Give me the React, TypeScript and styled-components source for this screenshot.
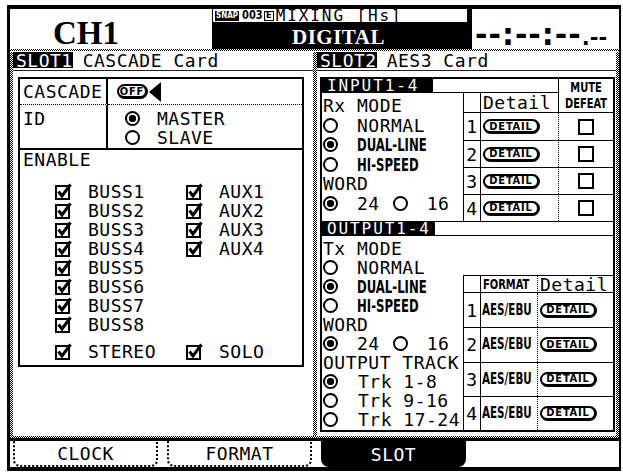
import styled, { createGlobalStyle, css } from "styled-components";

const LCD = `"DejaVu Sans Mono", "Liberation Mono", monospace`;
const NARROW = `"DejaVu Sans Condensed", "DejaVu Sans", "Liberation Sans", sans-serif`;
const SERIF = `"Liberation Serif", "DejaVu Serif", serif`;
const CHECKER = "repeating-conic-gradient(#000 0 25%, #fff 0 50%) 0 0 / 2px 2px";

const GlobalStyle = createGlobalStyle`
  html, body { margin: 0; padding: 0; background: #fff; }
  body { font-family: ${LCD}; font-size: 18px; color: #000; }
  * { box-sizing: border-box; }
`;

const Screen = styled.div`
  margin: 5px 0 0 7px;
  width: 614px;
  height: 466px;
  border: solid #000;
  border-width: 4px 2px 4px 3px;
  display: flex;
  flex-direction: column;
  letter-spacing: 0.5px;
  line-height: 19px;
`;

/* ---------- header ---------- */

const Header = styled.header`
  height: 39px;
  flex: none;
  display: grid;
  grid-template-columns: 202px 258px 1fr;
`;

const ChannelBox = styled.div`
  padding: 8px 0 0 43px;
  font-family: ${SERIF};
  font-weight: 700;
  font-size: 33px;
  line-height: 1;
  letter-spacing: 0;
`;

const TitleBox = styled.div`
  background: #000;
  display: flex;
  flex-direction: column;
  padding: 0 3px 0 1px;
`;

const SceneRow = styled.div`
  height: 13px;
  background: #fff;
  display: flex;
  align-items: center;
  padding-left: 2px;
  line-height: 13px;
  font-size: 16px;
  letter-spacing: 1.9px;
`;

const Narrow = styled.span<{ $size?: number }>`
  display: inline-block;
  font-family: ${NARROW};
  font-stretch: condensed;
  font-weight: 700;
  font-size: ${({ $size }) => $size ?? 13}px;
  letter-spacing: 0;
  transform: scaleY(1.35);
`;

const SnapBadge = styled.span`
  display: inline-flex;
  align-items: center;
  height: 10px;
  padding: 0 1px;
  background: #000;
  color: #fff;
  font-family: ${NARROW};
  font-stretch: condensed;
  font-weight: 700;
  font-size: 8px;
  letter-spacing: 0;
`;

const SceneNo = styled(Narrow)`
  margin-left: 3px;
  line-height: 10px;
  transform: scaleY(1.1);
`;

const EditFlag = styled.span`
  display: inline-flex;
  align-items: center;
  justify-content: center;
  height: 10px;
  width: 10px;
  margin-left: 1px;
  border: 1px solid #000;
  font-family: ${NARROW};
  font-weight: 700;
  font-size: 9px;
  letter-spacing: 0;
`;

const SceneName = styled.span`
  margin-left: 2px;
  white-space: pre;
`;

const ModeName = styled.div`
  flex: 1;
  padding: 5px 0 0 79px;
  color: #fff;
  font-family: ${SERIF};
  font-weight: 700;
  font-size: 21px;
  line-height: 1;
  letter-spacing: 0.5px;
`;

const TimeBox = styled.div`
  border-left: 2px solid #000;
  padding: 11px 0 0 3px;
  font-family: "DejaVu Sans", "Liberation Sans", sans-serif;
  font-weight: 700;
  font-size: 30px;
  line-height: 1;
  letter-spacing: 1px;
  white-space: pre;
`;

const TimeFrames = styled.span`
  font-size: 21px;
  letter-spacing: 0;
`;

const DotRule = styled.div`
  flex: none;
  height: 2px;
  margin: 1px 0;
  background: ${CHECKER};
`;

/* ---------- main area ---------- */

const Main = styled.main`
  flex: 1;
  min-height: 0;
  display: grid;
  grid-template-columns: 3px 300px 4px 1fr 3px;
`;

const DotColumn = styled.div`
  background: ${CHECKER};
`;

const Panel = styled.section`
  display: flex;
  flex-direction: column;
`;

const PanelTitle = styled.div`
  height: 19px;
  display: flex;
  align-items: flex-start;
  border-bottom: 1px solid #222;
  white-space: pre;
`;

const SlotLabel = styled.span`
  height: 16px;
  line-height: 17px;
  padding-left: 3px;
  background: #000;
  color: #fff;
`;

const CardName = styled.span`
  margin-left: 10px;
  line-height: 17px;
`;

const PanelBox = styled.div<{ $margin: string; $height: number }>`
  margin: ${({ $margin }) => $margin};
  height: ${({ $height }) => $height}px;
  border: 2px solid #000;
  display: flex;
  flex-direction: column;
`;

/* left: cascade card */

const SettingGrid = styled.div`
  display: grid;
  grid-template-columns: 88px 1fr;
  grid-template-rows: 26px 45px;
`;

const SettingCell = styled.div<{ $key?: boolean; $last?: boolean }>`
  display: flex;
  ${({ $key }) =>
    $key &&
    css`
      border-right: 2px solid #000;
      padding-left: 3px;
    `}
  ${({ $last }) =>
    $last
      ? css`
          border-bottom: 2px solid #000;
          flex-direction: column;
          padding-top: 4px;
        `
      : css`
          border-bottom: 1px dotted #000;
          align-items: center;
        `}
`;

const ToggleWrap = styled.div`
  display: flex;
  align-items: center;
  padding-left: 9px;
`;

const PillButton = styled.span<{ $width: number }>`
  display: inline-flex;
  align-items: center;
  justify-content: center;
  flex: none;
  width: ${({ $width }) => $width}px;
  height: 15px;
  border: 2px solid #000;
  border-right-width: 3px;
  border-bottom-width: 3px;
  border-radius: 8px;
  font-family: ${NARROW};
  font-stretch: condensed;
  font-weight: 700;
  font-size: 11px;
  letter-spacing: 0.8px;
  line-height: 1;
`;

const Cursor = styled.span`
  flex: none;
  width: 0;
  height: 0;
  margin-left: 1px;
  border-top: 10px solid transparent;
  border-bottom: 10px solid transparent;
  border-right: 12px solid #000;
`;

const Line = styled.div<{ $h?: number; $pad?: number; $gap?: number }>`
  display: flex;
  align-items: center;
  height: ${({ $h }) => $h ?? 19}px;
  padding-left: ${({ $pad }) => $pad ?? 0}px;
  gap: ${({ $gap }) => $gap ?? 19}px;
  white-space: pre;
`;

const Radio = styled.span<{ $on?: boolean; $inline?: boolean }>`
  flex: none;
  width: 15px;
  height: 15px;
  border: 2px solid #000;
  border-radius: 50%;
  background: ${({ $on }) =>
    $on ? "radial-gradient(circle, #000 0 3.4px, #fff 4px)" : "#fff"};
  ${({ $inline }) =>
    $inline &&
    css`
      margin-left: -6px;
    `}
`;

const EnableSection = styled.div`
  padding: 0 0 0 3px;
`;

const SectionLabel = styled.div`
  height: 20px;
  line-height: 20px;
`;

const CheckGrid = styled.div`
  margin-top: 12px;
  padding-left: 32px;
  display: grid;
  grid-template-columns: 17px 82px 17px auto;
  grid-auto-rows: 19px;
  column-gap: 16px;
  align-items: center;
`;

const CheckLabel = styled.span<{ $gapTop?: boolean }>`
  ${({ $gapTop }) =>
    $gapTop &&
    css`
      margin-top: 16px;
    `}
`;

const CheckSpot = styled.span<{ $gapTop?: boolean }>`
  display: flex;
  ${({ $gapTop }) =>
    $gapTop &&
    css`
      margin-top: 16px;
    `}
`;

const EmptyBox = styled.span`
  width: 16px;
  height: 16px;
  border: 2px solid #000;
`;

/* right: AES3 card */

const InputGrid = styled.div`
  display: grid;
  grid-template-columns: 141px 17px 78px 1fr;
  grid-template-rows: 14px 20px repeat(4, 27px);
  border-bottom: 1px solid #000;
`;

const OutputGrid = styled.div`
  flex: 1;
  display: grid;
  grid-template-columns: 141px 17px 57px 1fr;
  grid-template-rows: 14px 39px 18px repeat(4, 1fr);
`;

const SectionBar = styled.div<{ $span: string }>`
  grid-column: ${({ $span }) => $span};
  grid-row: 1;
  display: flex;
`;

const SectionTag = styled.span<{ $width: number }>`
  width: ${({ $width }) => $width}px;
  height: 14px;
  padding-left: 5px;
  background: #000;
  color: #fff;
  font-size: 16px;
  letter-spacing: 1.9px;
  line-height: 14px;
`;

const SectionFill = styled.span`
  flex: 1;
  border-bottom: 1px solid #000;
`;

const TableGap = styled.div`
  grid-column: 2 / 5;
  grid-row: 2;
`;

const MuteHead = styled.div`
  grid-column: 4;
  grid-row: 1 / 3;
  border-left: 1px solid #000;
  border-bottom: 1px solid #000;
  display: flex;
  flex-direction: column;
  align-items: center;
  justify-content: center;
  gap: 4px;
  line-height: 12px;
`;

const ModeColumn = styled.div<{ $rows: string; $top: number }>`
  grid-column: 1;
  grid-row: ${({ $rows }) => $rows};
  padding: ${({ $top }) => $top}px 0 0 1px;
  display: flex;
  flex-direction: column;
`;

const Cell = styled.div<{
  $line?: "solid" | "dotted";
  $head?: boolean;
  $top?: boolean;
  $align?: "start" | "center";
  $pad?: number;
}>`
  display: flex;
  align-items: center;
  justify-content: ${({ $align }) => ($align === "center" ? "center" : "flex-start")};
  padding-left: ${({ $pad }) => $pad ?? 0}px;
  border-left: 1px ${({ $line }) => $line ?? "solid"} #000;
  ${({ $head }) =>
    $head &&
    css`
      border-bottom: 1px solid #000;
    `}
  ${({ $top }) =>
    $top &&
    css`
      border-top: 1px solid #000;
    `}
  white-space: pre;
`;

/* ---------- tabs ---------- */

const BottomRule = styled.div`
  flex: none;
  height: 5px;
  background: ${CHECKER};
  border-bottom: 3px solid #000;
`;

const TabBar = styled.nav`
  flex: none;
  height: 26px;
  display: flex;
  gap: 9px;
  padding-left: 3px;
`;

const Tab = styled.div<{ $active?: boolean }>`
  width: 145px;
  display: flex;
  align-items: center;
  justify-content: center;
  border: 2px dotted #000;
  border-top: none;
  border-radius: 0 0 7px 7px;
  ${({ $active }) =>
    $active &&
    css`
      background: #000;
      color: #fff;
      border: none;
      border-radius: 0 0 8px 8px;
    `}
`;

const CheckMark = () => (
  <svg width="17" height="17" viewBox="0 0 17 17">
    <rect x="1" y="3" width="13" height="13" fill="#fff" stroke="#000" strokeWidth="2" />
    <path d="M3.5 8.5 L7 13 L15.5 1.5" fill="none" stroke="#000" strokeWidth="3" />
  </svg>
);

const busses = ["BUSS1", "BUSS2", "BUSS3", "BUSS4", "BUSS5", "BUSS6", "BUSS7", "BUSS8"];
const auxes = ["AUX1", "AUX2", "AUX3", "AUX4"];

export default function App() {
  return (
    <>
      <GlobalStyle />
      <Screen>
        <Header>
          <ChannelBox>CH1</ChannelBox>
          <TitleBox>
            <SceneRow>
              <SnapBadge>SNAP</SnapBadge>
              <SceneNo $size={11}>003</SceneNo>
              <EditFlag>E</EditFlag>
              <SceneName>MIXING [Hs]</SceneName>
            </SceneRow>
            <ModeName>DIGITAL</ModeName>
          </TitleBox>
          <TimeBox>
            --:--:--<TimeFrames>.--</TimeFrames>
          </TimeBox>
        </Header>
        <DotRule />
        <Main>
          <DotColumn />
          <Panel>
            <PanelTitle>
              <SlotLabel>SLOT1</SlotLabel>
              <CardName>CASCADE Card</CardName>
            </PanelTitle>
            <PanelBox $margin="6px 9px 0 5px" $height={290}>
              <SettingGrid>
                <SettingCell $key>CASCADE</SettingCell>
                <SettingCell>
                  <ToggleWrap>
                    <PillButton $width={31}>OFF</PillButton>
                    <Cursor />
                  </ToggleWrap>
                </SettingCell>
                <SettingCell $key $last>
                  <Line>ID</Line>
                </SettingCell>
                <SettingCell $last>
                  <Line $pad={17} $gap={17}>
                    <Radio $on />
                    MASTER
                  </Line>
                  <Line $pad={17} $gap={17}>
                    <Radio />
                    SLAVE
                  </Line>
                </SettingCell>
              </SettingGrid>
              <EnableSection>
                <SectionLabel>ENABLE</SectionLabel>
                <CheckGrid>
                  {busses.map((b, i) => [
                    <CheckSpot key={b + "c"}>
                      <CheckMark />
                    </CheckSpot>,
                    <CheckLabel key={b}>{b}</CheckLabel>,
                    auxes[i] ? (
                      <CheckSpot key={auxes[i] + "c"}>
                        <CheckMark />
                      </CheckSpot>
                    ) : (
                      <span key={b + "e1"} />
                    ),
                    auxes[i] ? <CheckLabel key={auxes[i]}>{auxes[i]}</CheckLabel> : <span key={b + "e2"} />,
                  ])}
                  <CheckSpot $gapTop>
                    <CheckMark />
                  </CheckSpot>
                  <CheckLabel $gapTop>STEREO</CheckLabel>
                  <CheckSpot $gapTop>
                    <CheckMark />
                  </CheckSpot>
                  <CheckLabel $gapTop>SOLO</CheckLabel>
                </CheckGrid>
              </EnableSection>
            </PanelBox>
          </Panel>
          <DotColumn />
          <Panel>
            <PanelTitle>
              <SlotLabel>SLOT2</SlotLabel>
              <CardName>AES3 Card</CardName>
            </PanelTitle>
            <PanelBox $margin="6px 1px 0 3px" $height={355}>
              <InputGrid>
                <SectionBar $span="1 / 4">
                  <SectionTag $width={111}>INPUT1-4</SectionTag>
                  <SectionFill />
                </SectionBar>
                <MuteHead>
                  <Narrow $size={11}>MUTE</Narrow>
                  <Narrow $size={11}>DEFEAT</Narrow>
                </MuteHead>
                <ModeColumn $rows="2 / 7" $top={3}>
                  <Line $h={19.5}>Rx MODE</Line>
                  <Line $h={19.5}>
                    <Radio />
                    NORMAL
                  </Line>
                  <Line $h={19.5}>
                    <Radio $on />
                    <Narrow>DUAL-LINE</Narrow>
                  </Line>
                  <Line $h={19.5}>
                    <Radio />
                    <Narrow>HI-SPEED</Narrow>
                  </Line>
                  <Line $h={19.5}>WORD</Line>
                  <Line $h={19.5}>
                    <Radio $on />
                    24
                    <Radio $inline />
                    16
                  </Line>
                </ModeColumn>
                <Cell $head />
                <Cell $head $pad={2}>
                  Detail
                </Cell>
                {[1, 2, 3, 4].map((n) => [
                  <Cell key={n + "n"} $top={n > 1} $align="center">
                    {n}
                  </Cell>,
                  <Cell key={n + "d"} $top={n > 1} $pad={2}>
                    <PillButton $width={57}>DETAIL</PillButton>
                  </Cell>,
                  <Cell key={n + "m"} $top={n > 1} $line="dotted" $align="center">
                    <EmptyBox />
                  </Cell>,
                ])}
              </InputGrid>
              <OutputGrid>
                <SectionBar $span="1 / 5">
                  <SectionTag $width={113}>OUTPUT1-4</SectionTag>
                  <SectionFill />
                </SectionBar>
                <ModeColumn $rows="2 / 8" $top={3}>
                  <Line>Tx MODE</Line>
                  <Line>
                    <Radio />
                    NORMAL
                  </Line>
                  <Line>
                    <Radio $on />
                    <Narrow>DUAL-LINE</Narrow>
                  </Line>
                  <Line>
                    <Radio />
                    <Narrow>HI-SPEED</Narrow>
                  </Line>
                  <Line>WORD</Line>
                  <Line>
                    <Radio $on />
                    24
                    <Radio $inline />
                    16
                  </Line>
                  <Line>OUTPUT TRACK</Line>
                  <Line $gap={20}>
                    <Radio $on />
                    Trk 1-8
                  </Line>
                  <Line $gap={20}>
                    <Radio />
                    Trk 9-16
                  </Line>
                  <Line $gap={20}>
                    <Radio />
                    Trk 17-24
                  </Line>
                </ModeColumn>
                <TableGap />
                <Cell $head $top />
                <Cell $head $top $pad={2}>
                  <Narrow $size={11}>FORMAT</Narrow>
                </Cell>
                <Cell $head $top $line="dotted" $pad={2}>
                  Detail
                </Cell>
                {[1, 2, 3, 4].map((n) => [
                  <Cell key={n + "n"} $top={n > 1} $align="center">
                    {n}
                  </Cell>,
                  <Cell key={n + "f"} $top={n > 1} $pad={1}>
                    <Narrow $size={11.5}>AES/EBU</Narrow>
                  </Cell>,
                  <Cell key={n + "d"} $top={n > 1} $line="dotted" $pad={2}>
                    <PillButton $width={57}>DETAIL</PillButton>
                  </Cell>,
                ])}
              </OutputGrid>
            </PanelBox>
          </Panel>
          <DotColumn />
        </Main>
        <BottomRule />
        <TabBar>
          <Tab>CLOCK</Tab>
          <Tab>FORMAT</Tab>
          <Tab $active>SLOT</Tab>
        </TabBar>
      </Screen>
    </>
  );
}
